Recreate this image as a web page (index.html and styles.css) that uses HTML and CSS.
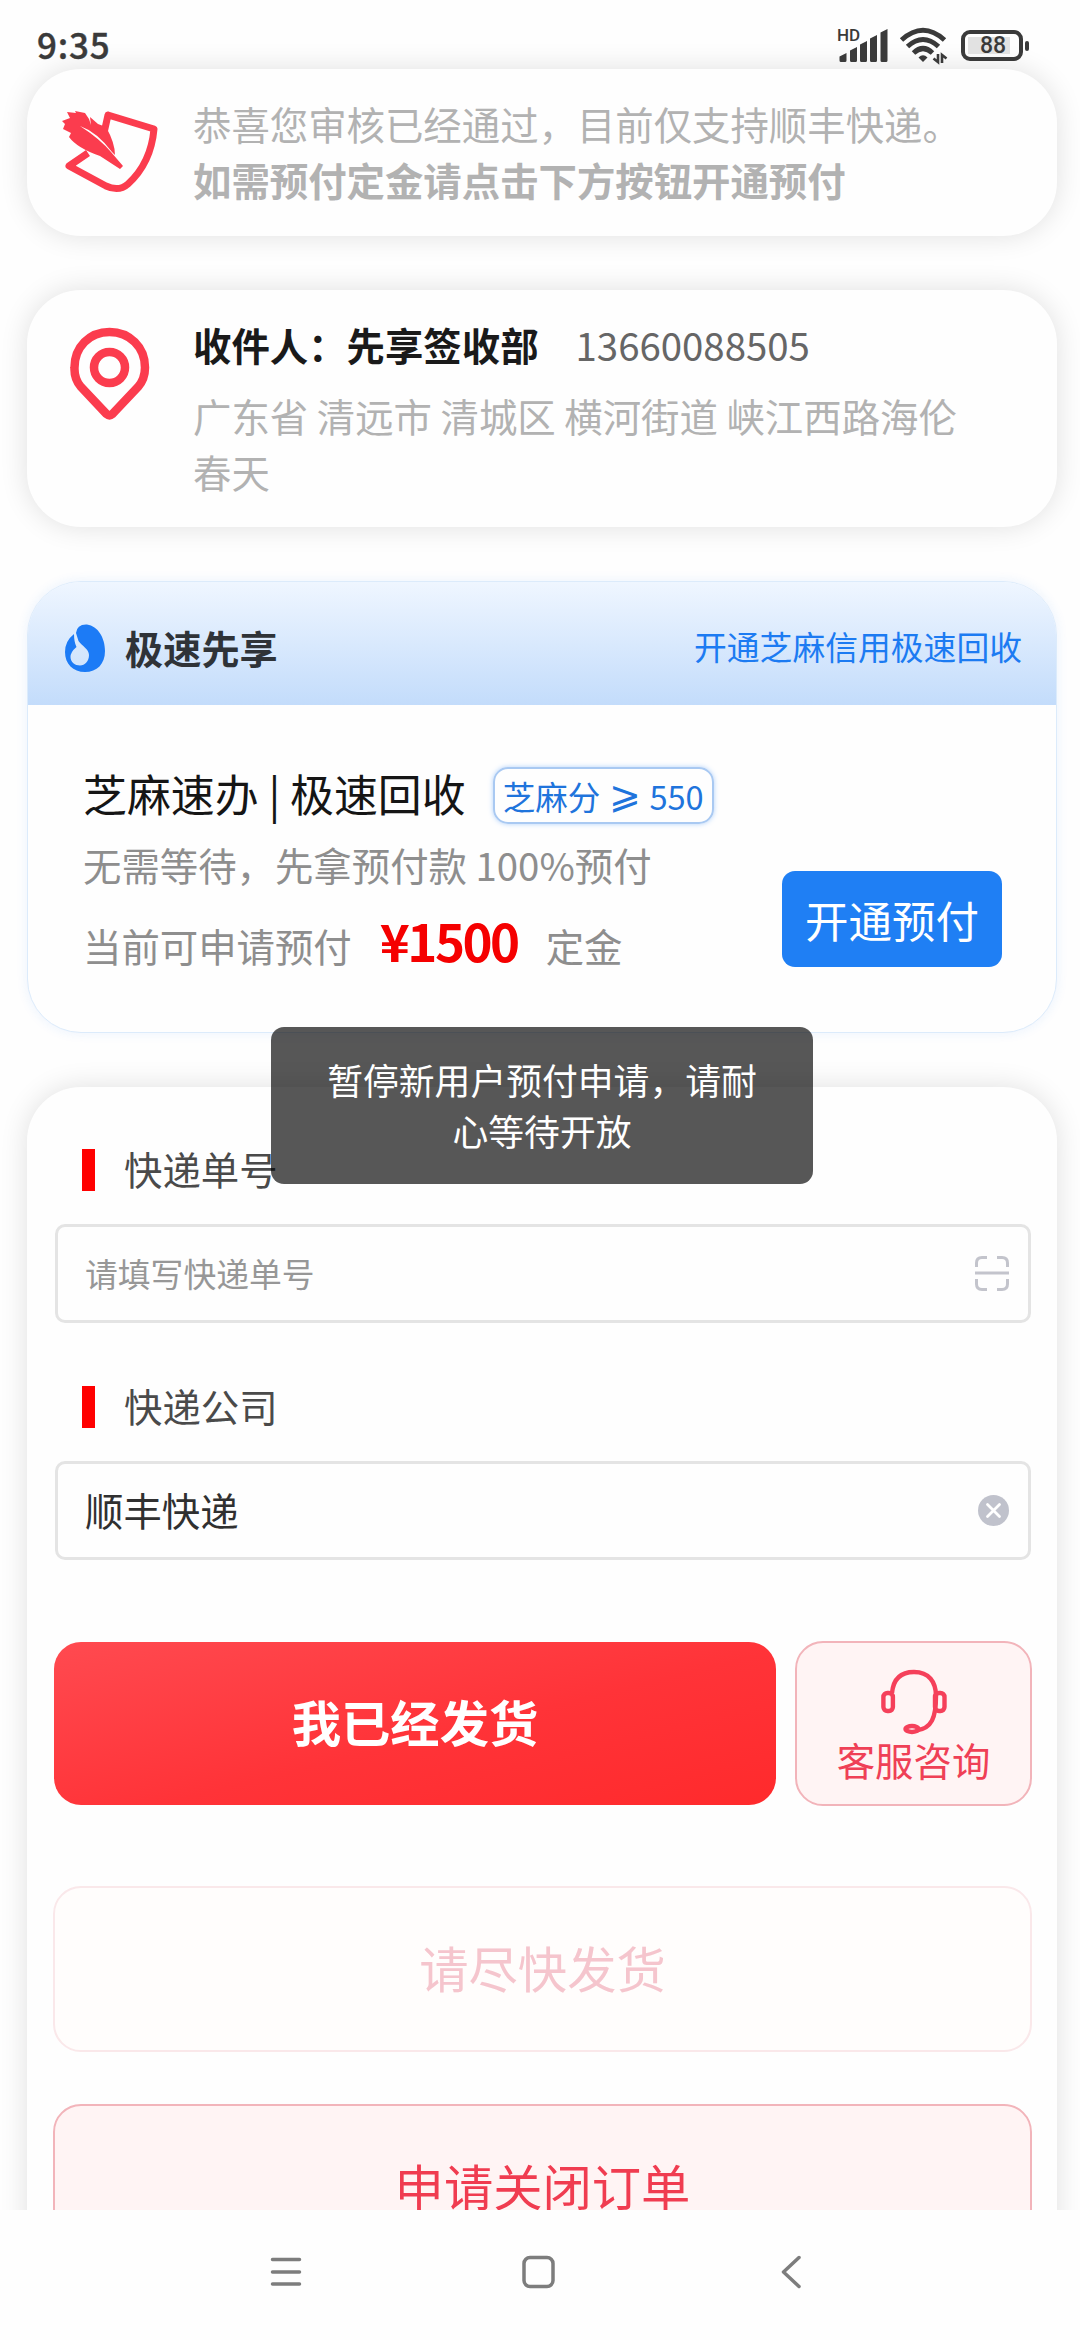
FILE: index.html
```html
<!DOCTYPE html>
<html lang="zh-CN">
<head>
<meta charset="utf-8">
<title>订单发货</title>
<link rel="stylesheet" href="styles.css">
</head>
<body>
<div class="screen">
  <header class="status">
    <span class="clock">9:35</span>
    <div class="indicators">
      <svg class="signal" width="52" height="36" viewBox="0 0 52 36" fill="#3a3a3a">
        <text x="0" y="14.500" class="hd">HD</text>
        <path d="M2.500 34.500v-4l7-3.500v7.500q0 1.500-1.500 1.500h-4q-1.500 0-1.500-1.500zM13 34.500v-10l7-3.500v13.500q0 1.500-1.500 1.500h-4q-1.500 0-1.500-1.500zM23 34.500v-16l7-3.500v19.500q0 1.500-1.500 1.500h-4q-1.500 0-1.500-1.500zM33 34.500v-22l7-3.500v25.500q0 1.500-1.500 1.500h-4q-1.500 0-1.500-1.500zM43.500 34.500v-28l7-3.500v31.500q0 1.500-1.500 1.500h-4q-1.500 0-1.500-1.500z"/>
      </svg>
      <svg class="wifi" width="46" height="36" viewBox="0 0 46 36" fill="none" stroke="#3a3a3a" stroke-width="5">
        <path d="M1.500 13Q23-6.500 44.500 13M7.500 19.500Q23 5.500 38.500 19.500M13.500 26Q23 17 32.500 26"/>
        <path d="M18.500 30.500q4.500-4.500 9 0l-4.500 4.500z" fill="#3a3a3a" stroke="none"/>
        <path d="M38 27v8l-4.500-3.500M42 36v-8l4.500 3.500" stroke-width="2.600"/>
      </svg>
      <div class="battery"><div class="cell"><span>88</span></div><i class="nub"></i></div>
    </div>
  </header>

  <main class="page">
    <section class="card notice">
      <svg class="icon" width="98" height="84" viewBox="0 0 98 84">
        <path d="M42 23 46 5 92 19Q89 53 66 74 57 82 44 76L7 56 26 43" fill="none" stroke="#fb3c4e" stroke-width="7" stroke-linejoin="round"/>
        <path d="M0 11 8 8 5 2 14 3 13 1 23 3 27 9 29 15 28 7 36 14 44 17Q53 33 53 45L50 42Q35 22 18 16 38 29 49 42L61 56 58 59 38 46Q15 38 7 27L9 23 1 19 3 14z" fill="#fb3c4e"/>
      </svg>
      <div class="copy">
        <p>恭喜您审核已经通过，目前仅支持顺丰快递。</p>
        <p class="strong">如需预付定金请点击下方按钮开通预付</p>
      </div>
    </section>

    <section class="card address">
      <svg class="icon" width="80" height="96" viewBox="0 0 80 96" fill="none" stroke="#fb3c4e" stroke-width="8.500">
        <path d="M36.500 89 11 62Q4 54 4.500 42.500C4.500 22 19.500 7 39.500 7S75 22 75 42.500Q75 54 68 62L42.500 89Q39.500 91.500 36.500 89z"/>
        <circle cx="39.500" cy="42.500" r="15.500"/>
      </svg>
      <div class="copy">
        <p class="who"><b>收件人：先享签收部</b><span>13660088505</span></p>
        <p>广东省 清远市 清城区 横河街道 峡江西路海伦春天</p>
      </div>
    </section>

    <section class="card credit">
      <div class="credit-head">
        <svg width="40" height="48" viewBox="0 0 40 48">
          <path d="M11 9Q12 0 22 .5C33 2 40 14 40 27 40 40 32 48 20 48S0 40 0 28Q0 17 9 10 9 18 11.500 23 5.500 28 5.500 33C5.500 38 10 41.500 15 41.500S24 37 24 31C24 25 17 22 13.500 17 10.500 13 11 9z" fill="#1c7bf6"/>
        </svg>
        <h2>极速先享</h2>
        <a>开通芝麻信用极速回收</a>
      </div>
      <div class="credit-body">
        <div class="terms">
          <div class="title-row"><h3>芝麻速办 | 极速回收</h3><span class="chip">芝麻分 <span class="gte">⩾</span> 550</span></div>
          <p class="line">无需等待，先拿预付款 100%预付</p>
          <p class="line amount">当前可申请预付<b>¥1500</b>定金</p>
        </div>
        <button class="prepay">开通预付</button>
      </div>
    </section>

    <section class="card form">
      <h4 class="label"><span>快递单号</span></h4>
      <div class="field empty">
        <span>请填写快递单号</span>
        <svg width="34" height="35" viewBox="0 0 34 35" fill="none" stroke="#c3c4cc" stroke-width="3">
          <path d="M1.500 11V7Q1.500 1.500 7 1.500h5M22 1.500h5q5.500 0 5.500 5.500v4M1.500 23v5Q1.500 33.500 7 33.500h5M22 33.500h5q5.500 0 5.500-5.500v-5M0 17h34"/>
        </svg>
      </div>
      <h4 class="label second"><span>快递公司</span></h4>
      <div class="field">
        <span>顺丰快递</span>
        <svg width="31" height="31" viewBox="0 0 31 31"><circle cx="15.500" cy="15.500" r="15.500" fill="#c0c2cc"/><path d="M9.500 9.500l12 12M21.500 9.500l-12 12" stroke="#fff" stroke-width="2.800" stroke-linecap="round"/></svg>
      </div>
      <div class="actions">
        <button class="shipped">我已经发货</button>
        <button class="service">
          <svg width="66" height="66" viewBox="0 0 66 66" fill="none" stroke="#f5405a" stroke-width="4.400">
            <path d="M11 24Q13 3 33 3C48 3 55 13 55 27 55 48 51 60 35 61.500"/>
            <rect x="2.400" y="24" width="9.500" height="18" rx="4"/>
            <rect x="54" y="24" width="9.500" height="18" rx="4"/>
            <ellipse cx="31" cy="60" rx="6.500" ry="3"/>
          </svg>
          <span>客服咨询</span>
        </button>
      </div>
      <button class="wide hurry">请尽快发货</button>
      <button class="wide close">申请关闭订单</button>
    </section>
  </main>

  <nav class="navbar">
    <svg width="34" height="34" viewBox="0 0 34 34"><path d="M3.500 4.500h27M3.500 17h27M3.500 29h27"/></svg>
    <svg width="34" height="34" viewBox="0 0 34 34"><rect x="2" y="2.500" width="29" height="29" rx="6"/></svg>
    <svg width="34" height="34" viewBox="0 0 34 34"><path d="M25 2.500 9.500 17 25 31.500"/></svg>
  </nav>

  <div class="toast">暂停新用户预付申请，请耐心等待开放</div>
</div>
</body>
</html>
```

FILE: styles.css
```css
* { box-sizing: border-box; margin: 0; padding: 0; }
body { font-family: "Noto Sans CJK SC", sans-serif; background: #fefefe; }
button { border: 0; font: inherit; display: block; }
svg { display: block; flex: none; }

.screen {
  position: relative;
  width: 1080px;
  height: 2340px;
  overflow: hidden;
  display: flex;
  flex-direction: column;
  background: #fefefe;
}

.status {
  flex: none;
  height: 69px;
  padding: 0 51px 0 37px;
  display: flex;
  justify-content: space-between;
  position: relative;
  z-index: 1;
}
.clock { font: 500 35px/50px "Noto Sans CJK SC", sans-serif; color: #3a3a3a; letter-spacing: .8px; padding-top: 19px; height: 69px; -webkit-text-stroke: .4px #3a3a3a; }
.indicators { display: flex; padding-top: 26px; }
.hd { font: 500 17px "Roboto", sans-serif; }
.signal { margin-right: 11px; }
.wifi { margin: 1px 15px 0 0; overflow: visible; }
.battery { display: flex; align-items: center; height: 31px; gap: 2px; margin-top: 4px; }
.cell { width: 62px; height: 31px; border: 4px solid #3a3a3a; border-radius: 9px; padding: 3px; }
.cell span {
  display: block; height: 17px; width: 42px; background: #e2e2e2;
  font: 500 23px/18px "Roboto", sans-serif; color: #3a3a3a; padding-left: 12px;
}
.nub { width: 4px; height: 10px; border-radius: 2px; background: #3a3a3a; }

.page {
  flex: 1;
  min-height: 0;
  padding: 0 23px 0 27px;
  display: flex;
  flex-direction: column;
  gap: 54px;
}
.card {
  flex: none;
  background: #fefefe;
  border-radius: 54px;
  box-shadow: 0 0 28px rgba(0, 0, 0, .12);
}

.notice, .address { display: flex; color: #b2b2b2; font-size: 38.400px; line-height: 56px; }
.copy { width: 790px; }
.notice { height: 167px; padding: 26px 0 0 35px; }
.notice .icon { margin: 15px 33px 0 0; }
.strong { font-weight: 700; }
.address { height: 237px; padding: 26px 0 0 43px; }
.address .icon { margin: 9px 43px 0 0; }
.who { display: flex; gap: 37px; margin-bottom: 15px; color: #666; }
.who b { color: #1a1a1a; }

.credit { height: 452px; border: 1px solid #dcebfb; box-shadow: 0 0 12px rgba(28, 123, 246, .09); overflow: hidden; }
.credit-head {
  height: 123px;
  padding: 12px 34px 0 37px;
  display: flex;
  align-items: center;
  background: linear-gradient(#eff6ff, #c3dcfb);
}
.credit-head svg { margin-top: -3px; }
.credit-head h2 { font-size: 38.200px; line-height: 56px; color: #2f3338; margin: -4px auto 0 20px; }
.credit-head a { font-size: 32.800px; line-height: 48px; color: #1c7bf2; margin-top: -7px; }
.credit-body { display: flex; justify-content: space-between; padding: 56px 54px 0 55px; }
.title-row { display: flex; align-items: center; gap: 27px; height: 64px; }
.title-row h3 { font-size: 43.900px; line-height: 64px; font-weight: 400; color: #151515; }
.chip {
  display: flex; align-items: center; justify-content: space-between; white-space: pre;
  width: 221px; height: 57px; margin-top: 4px; padding: 0 8px; border: 2px solid #a9c9f2; border-radius: 15px;
  box-shadow: 0 0 5px rgba(28, 123, 246, .35);
  font-size: 32.600px; line-height: 55px; color: #1f74dc;
}
.gte { font-size: 38px; line-height: 46px; padding-bottom: 7px; }
.line { font-size: 38.400px; line-height: 56px; margin-top: 11px; color: #8e8e8e; white-space: nowrap; }
.amount { line-height: 72px; margin-top: 12px; }
.amount b { font-size: 51px; letter-spacing: -2.500px; color: #f50000; margin: 0 28px 0 28px; }
.prepay { width: 220px; height: 96px; margin-top: 110px; border-radius: 13px; background: #1f7ff4; color: #fff; font-size: 43.500px; }

.form { height: 1240px; padding: 62px 26px 0 28px; }
.label { display: flex; align-items: center; gap: 29px; height: 42px; margin-left: 27px; font-weight: 400; font-size: 38.400px; line-height: 42px; color: #4a4a4a; }
.label::before { content: ""; width: 13px; height: 42px; background: #f00; }
.label span { padding-bottom: 5px; }
.label.second { margin-top: 63px; }
.field {
  height: 99px; margin-top: 33px; padding: 0 19px 0 27px;
  border: 3px solid #e4e4e4; border-radius: 10px;
  display: flex; align-items: center; justify-content: space-between;
  font-size: 38.400px; color: #303030;
}
.field span { padding-bottom: 4px; }
.field.empty { font-size: 32.800px; color: #979797; }
.field.empty span { padding-bottom: 2px; }
.actions { display: flex; gap: 19px; margin: 81px -2px 0 -1px; align-items: center; }
.shipped { width: 722px; height: 163px; padding-bottom: 6px; border-radius: 27px; background: linear-gradient(166deg, #ff4a50, #ff3338 55%, #ff2a2c); color: #fff; font-size: 49.300px; font-weight: 700; }
.service {
  width: 237px; height: 165px; border: 2px solid #f2b4ba; border-radius: 28px; background: #fff4f4;
  display: flex; flex-direction: column; align-items: center; padding-top: 26px;
  font-size: 38.400px; line-height: 49px; color: #ef4056;
}
.wide { width: 979px; height: 166px; margin-left: -2px; padding-bottom: 6px; border: 2px solid #f2b4ba; border-radius: 28px; background: #fff4f4; color: #f03c50; font-size: 49.300px; }
.hurry { margin-top: 80px; border-color: #fae8ea; background: #fffdfc; color: #f5c5cd; }
.close { margin-top: 52px; }

.navbar {
  flex: none; height: 130px; padding: 45px 272px 0 269px;
  display: flex; justify-content: space-between; align-items: flex-start;
  background: #fefefe; position: relative; z-index: 1;
}
.navbar svg { fill: none; stroke: #7d7d7d; stroke-width: 3.500; stroke-linecap: round; stroke-linejoin: round; }

.toast {
  position: absolute; left: 271px; top: 1027px; z-index: 2;
  width: 542px; height: 157px; padding: 27px 54px 0; border-radius: 13px;
  background: rgba(0, 0, 0, .66); color: #fff;
  font-size: 35.800px; line-height: 51px; text-align: center;
}
```
